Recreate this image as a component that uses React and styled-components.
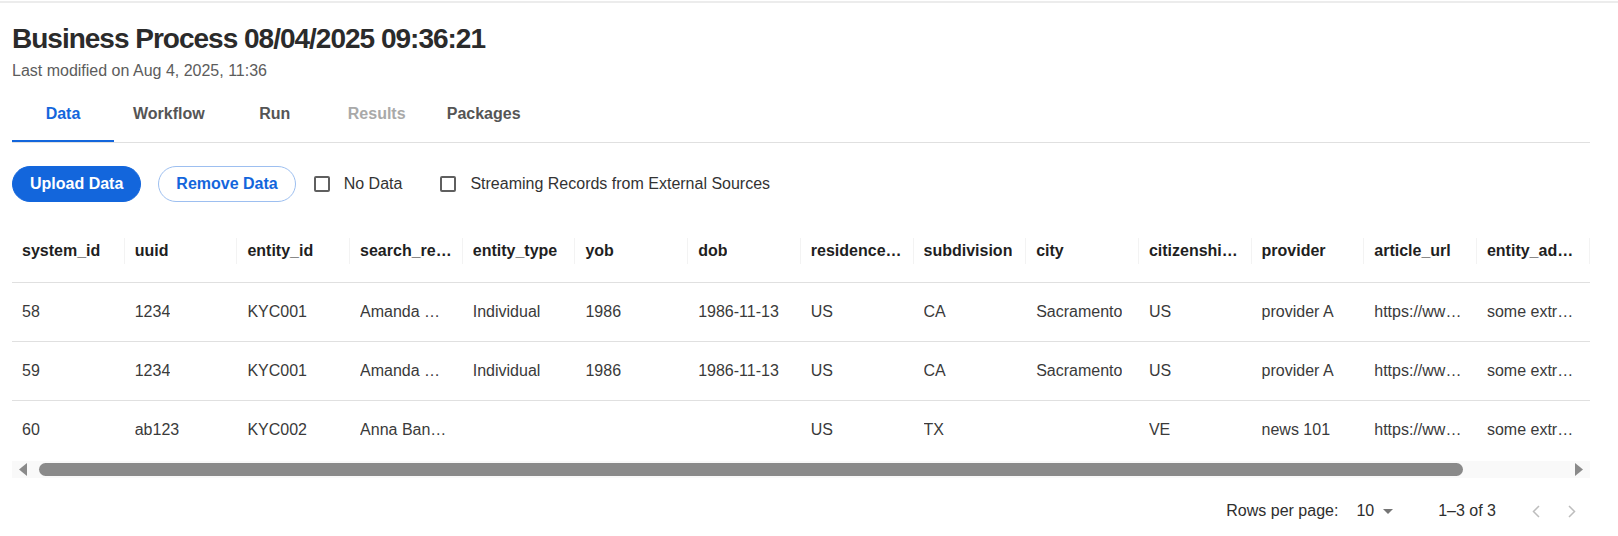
import React from "react";
import styled, { createGlobalStyle } from "styled-components";

const COL_W = 112.7;
const BLUE = "#1366dc";

const GlobalStyle = createGlobalStyle`
  body {
    margin: 0;
    background: #ffffff;
    font-family: "Liberation Sans", Arial, sans-serif;
  }
`;

const TopRule = styled.div`
  height: 2px;
  margin-top: 1px;
  background: #ececec;
`;

const Page = styled.div`
  padding: 0 28px 0 12px;
`;

const Title = styled.h1`
  margin: 19px 0 0;
  font-size: 28px;
  line-height: 34px;
  font-weight: 700;
  letter-spacing: -1px;
  color: #2b2b2b;
`;

const Subtitle = styled.div`
  margin-top: 5px;
  font-size: 16px;
  line-height: 20px;
  color: #5c5c5c;
`;

const TabList = styled.div`
  display: flex;
  margin-top: 9px;
  border-bottom: 1px solid #e0e0e0;
`;

const Tab = styled.div`
  box-sizing: border-box;
  height: 52px;
  min-width: 102px;
  padding: 0 19px 4px;
  display: flex;
  align-items: center;
  justify-content: center;
  font-size: 16px;
  font-weight: 700;
  color: ${(p) => (p.$active ? BLUE : p.$disabled ? "#a9a9a9" : "#555555")};
  box-shadow: ${(p) => (p.$active ? `inset 0 -2px 0 ${BLUE}` : "none")};
`;

const Toolbar = styled.div`
  display: flex;
  align-items: center;
  height: 36px;
  margin-top: 23px;
`;

const PillButton = styled.button`
  box-sizing: border-box;
  height: 36px;
  padding: 0 17px;
  border-radius: 18px;
  font-family: inherit;
  font-size: 16px;
  font-weight: 700;
  cursor: pointer;
  background: ${(p) => (p.$outline ? "#ffffff" : BLUE)};
  color: ${(p) => (p.$outline ? BLUE : "#ffffff")};
  border: 1px solid ${(p) => (p.$outline ? "#9dbff0" : BLUE)};
  margin-left: ${(p) => p.$gap || 0}px;
`;

const CheckLabel = styled.label`
  display: flex;
  align-items: center;
  gap: 14px;
  margin-left: ${(p) => p.$gap}px;
  font-size: 16px;
  color: #333333;
`;

const CheckBox = styled.span`
  box-sizing: border-box;
  width: 16px;
  height: 16px;
  border: 2px solid #5f5f5f;
  border-radius: 2px;
`;

const Viewport = styled.div`
  margin-top: 17px;
  overflow: hidden;
`;

const Row = styled.div`
  display: grid;
  grid-template-columns: repeat(15, ${COL_W}px);
  border-bottom: ${(p) => (p.$last ? "none" : "1px solid #e0e0e0")};
`;

const HeadCell = styled.div`
  box-sizing: border-box;
  height: 63px;
  padding: 0 10px;
  display: flex;
  align-items: center;
  font-size: 16px;
  font-weight: 700;
  color: #1f1f1f;
  background: linear-gradient(#f3f3f3, #f3f3f3) right center / 1px 26px no-repeat;
`;

const Cell = styled.div`
  box-sizing: border-box;
  height: 58px;
  padding: 0 10px;
  display: flex;
  align-items: center;
  font-size: 16px;
  color: #3a3a3a;
`;

const Clip = styled.span`
  min-width: 0;
  overflow: hidden;
  white-space: nowrap;
  text-overflow: ellipsis;
`;

const ScrollBar = styled.div`
  display: flex;
  align-items: center;
  height: 17px;
  margin-top: 2px;
  background: #f9f9f9;
`;

const ScrollArrow = styled.div`
  width: 22px;
  display: flex;
  align-items: center;
  justify-content: center;
`;

const ScrollTrack = styled.div`
  flex: 1;
  padding: 0 3px 0 5px;
`;

const Thumb = styled.div`
  height: 13px;
  border-radius: 7px;
  background: #8a8a8a;
`;

const Pagination = styled.div`
  display: flex;
  align-items: center;
  justify-content: flex-end;
  height: 40px;
  margin-top: 13px;
  padding-right: 6px;
  font-size: 16px;
  color: #2e2e2e;
`;

const PageSelect = styled.div`
  display: flex;
  align-items: center;
  gap: 9px;
  margin-left: 18px;
`;

const Displayed = styled.div`
  margin-left: 45px;
`;

const PageButton = styled.div`
  width: 24px;
  height: 24px;
  display: flex;
  align-items: center;
  justify-content: center;
  margin-left: ${(p) => p.$gap}px;
`;

const columns = [
  "system_id",
  "uuid",
  "entity_id",
  "search_result_name",
  "entity_type",
  "yob",
  "dob",
  "residence_country",
  "subdivision",
  "city",
  "citizenship_country",
  "provider",
  "article_url",
  "entity_additional_info",
  "",
];

const rows = [
  ["58", "1234", "KYC001", "Amanda Williams", "Individual", "1986", "1986-11-13", "US", "CA", "Sacramento", "US", "provider A", "https://www.example.com/a", "some extra info", ""],
  ["59", "1234", "KYC001", "Amanda Williams", "Individual", "1986", "1986-11-13", "US", "CA", "Sacramento", "US", "provider A", "https://www.example.com/b", "some extra info", ""],
  ["60", "ab123", "KYC002", "Anna Bannister", "", "", "", "US", "TX", "", "VE", "news 101", "https://www.example.com/c", "some extra info", ""],
];

const tabs = [
  { name: "Data", active: true },
  { name: "Workflow" },
  { name: "Run" },
  { name: "Results", disabled: true },
  { name: "Packages" },
];

function Triangle({ dir }) {
  const points = dir === "left" ? "8,0 0,6.5 8,13" : "0,0 8,6.5 0,13";
  return (
    <svg width="8" height="13" viewBox="0 0 8 13">
      <polygon points={points} fill="#8a8a8a" />
    </svg>
  );
}

function Chevron({ dir }) {
  const d = dir === "left" ? "M7 1 L1.5 6.5 L7 12" : "M1 1 L6.5 6.5 L1 12";
  return (
    <svg width="8" height="13" viewBox="0 0 8 13">
      <path d={d} fill="none" stroke="#bdbdbd" strokeWidth="1.5" />
    </svg>
  );
}

export default function App() {
  const viewportWidth = 1578;
  const thumbPct = Math.min(100, (viewportWidth / (COL_W * columns.length)) * 100);

  return (
    <>
      <GlobalStyle />
      <TopRule />
      <Page>
        <Title>Business Process 08/04/2025 09:36:21</Title>
        <Subtitle>Last modified on Aug 4, 2025, 11:36</Subtitle>

        <TabList>
          {tabs.map((t) => (
            <Tab key={t.name} $active={t.active} $disabled={t.disabled}>
              {t.name}
            </Tab>
          ))}
        </TabList>

        <Toolbar>
          <PillButton>Upload Data</PillButton>
          <PillButton $outline $gap={17}>
            Remove Data
          </PillButton>
          <CheckLabel $gap={18}>
            <CheckBox />
            No Data
          </CheckLabel>
          <CheckLabel $gap={38}>
            <CheckBox />
            Streaming Records from External Sources
          </CheckLabel>
        </Toolbar>

        <Viewport>
          <Row>
            {columns.map((c, i) => (
              <HeadCell key={i}>
                <Clip>{c}</Clip>
              </HeadCell>
            ))}
          </Row>
          {rows.map((r, i) => (
            <Row key={i} $last={i === rows.length - 1}>
              {r.map((v, j) => (
                <Cell key={j}>
                  <Clip>{v}</Clip>
                </Cell>
              ))}
            </Row>
          ))}
        </Viewport>

        <ScrollBar>
          <ScrollArrow>
            <Triangle dir="left" />
          </ScrollArrow>
          <ScrollTrack>
            <Thumb style={{ width: `${thumbPct}%` }} />
          </ScrollTrack>
          <ScrollArrow>
            <Triangle dir="right" />
          </ScrollArrow>
        </ScrollBar>

        <Pagination>
          Rows per page:
          <PageSelect>
            10
            <svg width="10" height="5" viewBox="0 0 10 5">
              <polygon points="0,0 10,0 5,5" fill="#757575" />
            </svg>
          </PageSelect>
          <Displayed>1–3 of 3</Displayed>
          <PageButton $gap={28}>
            <Chevron dir="left" />
          </PageButton>
          <PageButton $gap={12}>
            <Chevron dir="right" />
          </PageButton>
        </Pagination>
      </Page>
    </>
  );
}
